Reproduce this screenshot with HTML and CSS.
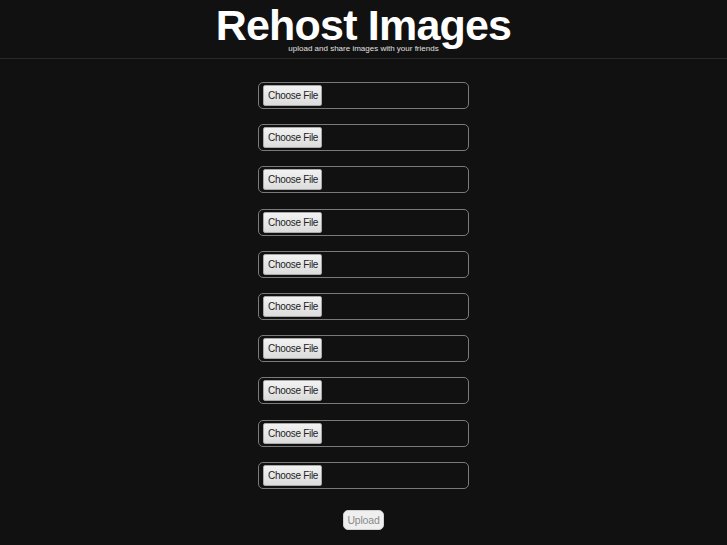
FILE: index.html
```html
<!DOCTYPE html>
<html>
<head>
<meta charset="utf-8">
<title>Rehost Images</title>
<link rel="stylesheet" href="styles.css">
</head>
<body>
<header class="site-header">
  <h1 class="title">Rehost Images</h1>
  <p class="tagline">upload and share images with your friends</p>
</header>
<main class="content">
  <form class="upload-form">
    <div class="file-field"><span class="file-btn">Choose File</span></div>
    <div class="file-field"><span class="file-btn">Choose File</span></div>
    <div class="file-field"><span class="file-btn">Choose File</span></div>
    <div class="file-field"><span class="file-btn">Choose File</span></div>
    <div class="file-field"><span class="file-btn">Choose File</span></div>
    <div class="file-field"><span class="file-btn">Choose File</span></div>
    <div class="file-field"><span class="file-btn">Choose File</span></div>
    <div class="file-field"><span class="file-btn">Choose File</span></div>
    <div class="file-field"><span class="file-btn">Choose File</span></div>
    <div class="file-field"><span class="file-btn">Choose File</span></div>
    <button type="button" class="upload-btn">Upload</button>
  </form>
</main>
</body>
</html>
```
FILE: styles.css
```css
html, body {
  margin: 0;
  padding: 0;
  background: #111111;
  font-family: "Liberation Sans", Arial, sans-serif;
  color: #ffffff;
}

.site-header {
  height: 58px;
  border-bottom: 1px solid #2a2a2a;
  text-align: center;
  overflow: hidden;
}

.title {
  margin: 0;
  padding-top: 2px;
  font-size: 43px;
  line-height: 46px;
  font-weight: bold;
  letter-spacing: -0.8px;
  color: #ffffff;
}

.tagline {
  margin: -4px 0 0 0;
  font-size: 8px;
  line-height: 9px;
  letter-spacing: 0;
  color: #e0e0e0;
}

.content {
  padding-top: 23px;
}

.upload-form {
  display: flex;
  flex-direction: column;
  align-items: center;
  gap: 15.2px;
}

.file-field {
  box-sizing: border-box;
  width: 211px;
  height: 27px;
  border: 1px solid #7a7a7a;
  border-radius: 5px;
  padding: 2px 4px;
  display: flex;
  align-items: center;
}

.file-btn {
  box-sizing: border-box;
  display: inline-flex;
  align-items: center;
  height: 21px;
  padding: 0 3px 0 4px;
  font-size: 10px;
  letter-spacing: -0.3px;
  color: #222222;
  background: linear-gradient(#f2f2f2, #dcdcdc);
  border: 1px solid #a8a8a8;
  border-radius: 2px;
}

.upload-btn {
  margin-top: 6px;
  box-sizing: border-box;
  height: 20px;
  padding: 0 3px;
  font-family: "Liberation Sans", Arial, sans-serif;
  font-size: 10.5px;
  letter-spacing: -0.2px;
  color: #8a8a8a;
  background: #efefef;
  border: 1px solid #d0d0d0;
  border-radius: 5px;
}
```
